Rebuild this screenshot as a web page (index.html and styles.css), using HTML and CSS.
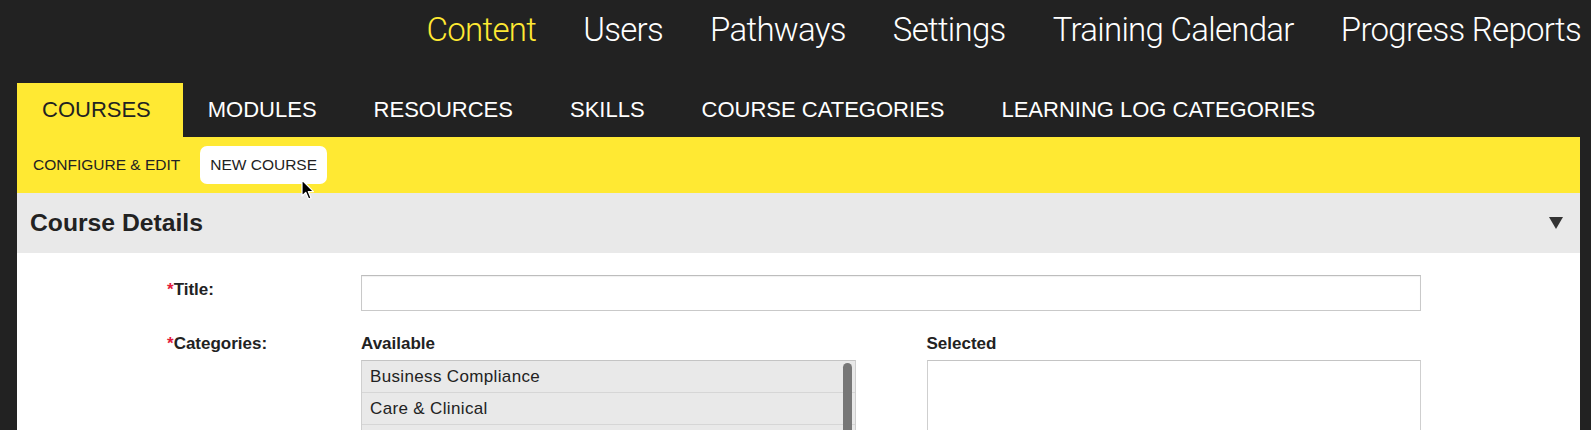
FILE: index.html
```html
<!DOCTYPE html>
<html>
<head>
	<title>Content - Courses</title>
	<link rel="stylesheet" href="styles.css">
</head>

<body>
	<nav class="topnav">
		<a href="#" class="active">Content</a>
		<a href="#">Users</a>
		<a href="#">Pathways</a>
		<a href="#">Settings</a>
		<a href="#">Training Calendar</a>
		<a href="#">Progress Reports</a>
	</nav>

	<div class="main">
		<div class="tabs">
			<a href="#" class="tab active">COURSES</a>
			<a href="#" class="tab">MODULES</a>
			<a href="#" class="tab">RESOURCES</a>
			<a href="#" class="tab">SKILLS</a>
			<a href="#" class="tab">COURSE CATEGORIES</a>
			<a href="#" class="tab">LEARNING LOG CATEGORIES</a>
		</div>

		<div class="subnav">
			<a href="#" class="subitem">CONFIGURE &amp; EDIT</a>
			<a href="#" class="subitem current">NEW COURSE</a>
			<svg class="pointer" width="14" height="22" viewBox="0 0 14 22">
				<path d="M1 1 L1 17 L4.8 13.4 L7.6 20 L10 19 L7.3 12.6 L12.5 12.6 Z" fill="#000" stroke="#fff" stroke-width="1.2" stroke-linejoin="round"/>
			</svg>
		</div>

		<div class="panel-head">
			<h2>Course Details</h2>
			<span class="toggle"></span>
		</div>

		<form class="panel-body">
			<label class="field-label" for="title"><span class="req">*</span>Title:</label>
			<input type="text" id="title" name="title" class="text-input">

			<label class="field-label"><span class="req">*</span>Categories:</label>
			<div class="picker">
				<div class="picker-col">
					<div class="picker-title">Available</div>
					<div class="listbox available">
						<div class="option">Business Compliance</div>
						<div class="option">Care &amp; Clinical</div>
						<span class="thumb"></span>
					</div>
				</div>
				<div class="picker-col">
					<div class="picker-title">Selected</div>
					<div class="listbox selected"></div>
				</div>
			</div>
		</form>
	</div>
</body>
</html>
```

FILE: styles.css
```css
/* styles.css */
html, body {
	overflow: hidden;
}

body {
	margin: 0;
	background: #222222;
	font-family: "Liberation Sans", Arial, sans-serif;
	color: #222222;
}

a {
	text-decoration: none;
}

.topnav {
	display: flex;
	justify-content: flex-end;
	align-items: flex-start;
	gap: 47px;
	height: 83px;
	padding: 10px 10px 0 0;
	box-sizing: border-box;
	font-family: Roboto, "Liberation Sans", sans-serif;
	font-weight: 300;
	font-size: 33px;
	letter-spacing: -0.7px;
}

.topnav a {
	color: #ffffff;
}

.topnav a.active {
	color: #ffe933;
}

.main {
	margin: 0 11px 0 17px;
}

.tabs {
	display: flex;
	height: 54px;
}

.tab {
	display: flex;
	align-items: center;
	padding: 0 32px 0 25px;
	font-size: 22px;
	color: #ffffff;
}

.tab.active {
	background: #ffe933;
	color: #222222;
}

.subnav {
	position: relative;
	display: flex;
	align-items: center;
	gap: 10px;
	height: 56px;
	padding-left: 6px;
	background: #ffe933;
}

.subitem {
	padding: 10px 10px;
	border-radius: 7px;
	font-size: 15.5px;
	color: #222222;
}

.subitem.current {
	background: #ffffff;
}

.pointer {
	position: absolute;
	left: 284px;
	top: 42px;
}

.panel-head {
	display: flex;
	justify-content: space-between;
	align-items: center;
	height: 60px;
	padding: 0 17px 0 13px;
	background: #e9e9e9;
}

.panel-head h2 {
	margin: 0;
	font-size: 24.7px;
	font-weight: bold;
	color: #222222;
}

.toggle {
	width: 0;
	height: 0;
	border-left: 7.5px solid transparent;
	border-right: 7.5px solid transparent;
	border-top: 12px solid #333333;
}

.panel-body {
	display: grid;
	grid-template-columns: 194px 1060px;
	row-gap: 18px;
	padding: 22px 0 0 150px;
	background: #ffffff;
	height: 300px;
	align-content: start;
}

.field-label {
	padding-top: 5px;
	font-size: 17px;
	font-weight: bold;
	color: #222222;
}

.req {
	color: #e31b3c;
}

.text-input {
	height: 36px;
	box-sizing: border-box;
	border: 1px solid #c9c9c9;
	border-top-color: #bdbdbd;
	box-shadow: inset 0 1px 1px rgba(0, 0, 0, 0.06);
	padding: 5px 8px;
	font-size: 16px;
	font-family: inherit;
}

.picker {
	display: flex;
	gap: 71px;
}

.picker-col {
	width: 495px;
}

.picker-title {
	padding-top: 5px;
	margin-bottom: 6px;
	font-size: 17px;
	font-weight: bold;
	color: #222222;
}

.listbox {
	position: relative;
	height: 160px;
	box-sizing: border-box;
	border: 1px solid #cfcfcf;
	border-top-color: #c4c4c4;
}

.listbox.available {
	background: #e9e9e9;
}

.listbox.selected {
	background: #ffffff;
}

.option {
	height: 32px;
	box-sizing: border-box;
	padding: 0 8px;
	display: flex;
	align-items: center;
	border-bottom: 1px solid #d6d6d6;
	font-size: 17px;
	letter-spacing: 0.35px;
	color: #222222;
}

.thumb {
	position: absolute;
	top: 2px;
	right: 3px;
	width: 9px;
	height: 110px;
	border-radius: 5px;
	background: #777777;
}
```
